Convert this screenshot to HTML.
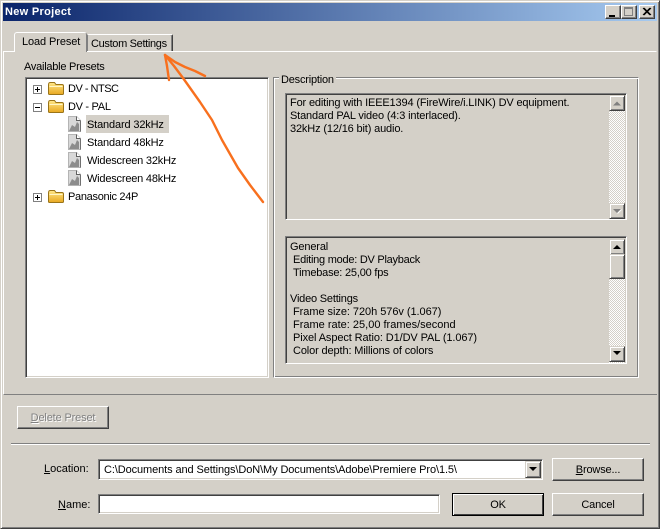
<!DOCTYPE html>
<html><head><meta charset="utf-8">
<style>
html,body{margin:0;padding:0}
body{width:660px;height:529px;overflow:hidden;position:relative;background:#d4d0c8;font:11px/13px "Liberation Sans",sans-serif;color:#000;letter-spacing:-.15px}
div{position:absolute;box-sizing:border-box}
.t{white-space:nowrap}
.btn{background:#d4d0c8;border:1px solid;border-color:#fff #404040 #404040 #fff;box-shadow:inset -1px -1px 0 #808080;text-align:center;line-height:22px}
.sunk{background:#fff;border:1px solid;border-color:#808080 #fff #fff #808080;box-shadow:inset 1px 1px 0 #404040,inset -1px -1px 0 #d4d0c8}
.sb{width:16px;height:16px;background:#d4d0c8;border:1px solid;border-color:#d4d0c8 #404040 #404040 #d4d0c8;box-shadow:inset 1px 1px 0 #fff,inset -1px -1px 0 #808080}
.track{width:16px;background:repeating-conic-gradient(#fff 0 25%,#d4d0c8 0 50%) 0 0/2px 2px}
u{text-decoration:underline}
svg{position:absolute;overflow:visible}
</style></head><body>
<!-- window frame -->
<div style="left:0;top:0;width:660px;height:529px;border:1px solid;border-color:#d4d0c8 #404040 #404040 #d4d0c8;box-shadow:inset 1px 1px 0 #fff,inset -1px -1px 0 #808080"></div>
<!-- title -->
<div style="left:3px;top:3px;width:654px;height:18px;background:linear-gradient(90deg,#0a246a,#a6caf0)"></div>
<div class="t" style="left:5px;top:5px;color:#fff;font-weight:bold;font-size:11px;line-height:14px;letter-spacing:.3px">New Project</div>
<div class="btn" style="left:605px;top:5px;width:16px;height:14px"></div><div style="left:609px;top:15px;width:6px;height:2px;background:#000"></div>
<div class="btn" style="left:621px;top:5px;width:16px;height:14px"></div><div style="left:624px;top:7px;width:9px;height:9px;border:1px solid #808080;border-top-width:2px"></div>
<div class="btn" style="left:639px;top:5px;width:16px;height:14px"></div>
<svg style="left:0;top:0" width="660" height="30"><path d="M643 8l7 7M644 8l7 7M650 8l-7 7M651 8l-7 7" stroke="#000" stroke-width="1" fill="none"/></svg>
<!-- tab panel -->
<div style="left:3px;top:51px;width:654px;height:344px;border:1px solid;border-color:#fff #d4d0c8 #808080 #fff"></div>
<div style="left:4px;top:394px;width:653px;height:1px;background:#808080"></div>
<!-- tabs -->
<div style="left:14px;top:32px;width:73px;height:20px;background:#d4d0c8;border:1px solid #fff;border-bottom:0;border-right:1px solid #808080;border-radius:3px 3px 0 0"></div>
<div class="t" style="left:22px;top:36px;letter-spacing:-.1px">Load Preset</div>
<div style="left:87px;top:34px;width:86px;height:17px;background:#d4d0c8;border:1px solid #808080;border-bottom:0;border-top-color:#fff;border-right:1px solid #404040;border-radius:2px 2px 0 0;box-shadow:inset -1px 0 0 #808080"></div>
<div class="t" style="left:91px;top:38px;letter-spacing:-.33px">Custom Settings</div>
<div class="t" style="left:24px;top:61px;letter-spacing:-.25px">Available Presets</div>
<!-- tree -->
<div class="sunk" style="left:25px;top:77px;width:244px;height:301px"></div>
<div style="left:86px;top:115px;width:83px;height:18px;background:#d4d0c8"></div>
<div class="t" style="left:68px;top:83px;letter-spacing:-.5px">DV - NTSC</div>
<div class="t" style="left:68px;top:101px;letter-spacing:-.3px">DV - PAL</div>
<div class="t" style="left:87px;top:119px">Standard 32kHz</div>
<div class="t" style="left:87px;top:137px">Standard 48kHz</div>
<div class="t" style="left:87px;top:155px;letter-spacing:-.2px">Widescreen 32kHz</div>
<div class="t" style="left:87px;top:173px;letter-spacing:-.2px">Widescreen 48kHz</div>
<div class="t" style="left:68px;top:191px;letter-spacing:-.3px">Panasonic 24P</div>
<svg style="left:0;top:0" width="660" height="529">
 <defs>
  <linearGradient id="f" x1="0" y1="0" x2="0" y2="1"><stop offset="0" stop-color="#ffe88a"/><stop offset="1" stop-color="#e8a820"/></linearGradient>
  <g id="fold"><path d="M.5 4V12.500Q.5 13.500 1.500 13.500H14.500Q15.500 13.500 15.500 12.500V5Q15.500 3.500 14 3.500H8L6.500 1.500H2Q.5 1.500 .5 4Z" fill="url(#f)" stroke="#9a7418"/><path d="M1.500 5.500H14.500" stroke="#fff6c8"/></g>
  <g id="pl"><rect x=".5" y=".5" width="8" height="8" fill="#fff" stroke="#808080"/><path d="M2 4.500H7" stroke="#000"/></g>
  <g id="doc"><path d="M.5.500H8.500L12.500 4.500V15.500H.5Z" fill="#d8d8d8" stroke="#b4b4b4"/><path d="M8.500.500V4.500H12.500" fill="#fff" stroke="#606060"/><path d="M1 15L4 9 7 11 9 6 11 8 11 15Z" fill="#8c8c8c"/><path d="M12.500 5V15.500" stroke="#707070"/></g>
 </defs>
 <use href="#pl" x="33" y="85"/><path d="M37.500 87V92" stroke="#000"/>
 <use href="#pl" x="33" y="103"/>
 <use href="#pl" x="33" y="193"/><path d="M37.500 195V200" stroke="#000"/>
 <use href="#fold" x="48" y="81"/><use href="#fold" x="48" y="99"/><use href="#fold" x="48" y="189"/>
 <use href="#doc" x="68" y="116"/><use href="#doc" x="68" y="134"/><use href="#doc" x="68" y="152"/><use href="#doc" x="68" y="170"/>
</svg>
<!-- description group -->
<div style="left:273px;top:77px;width:366px;height:301px;border:1px solid;border-color:#808080 #fff #fff #808080;box-shadow:inset 1px 1px 0 #fff,inset -1px -1px 0 #808080"></div>
<div class="t" style="left:279px;top:74px;background:#d4d0c8;padding:0 2px;letter-spacing:-.2px">Description</div>
<div class="sunk" style="left:285px;top:93px;width:342px;height:127px;background:#d4d0c8;box-shadow:inset 1px 1px 0 #404040"></div>
<div class="t" style="left:290px;top:97px">For editing with IEEE1394 (FireWire/i.LINK) DV equipment.<br>Standard PAL video (4:3 interlaced).<br>32kHz (12/16 bit) audio.</div>
<div class="track" style="left:609px;top:95px;height:123px"></div>
<div class="sb" style="left:609px;top:95px"></div>
<div class="sb" style="left:609px;top:203px"></div>
<svg style="left:0;top:0" width="660" height="529"><path d="M613 105.500L617 101.500L621 105.500Z" fill="#808080"/><path d="M613 209L617 213L621 209Z" fill="#808080"/><path d="M617.500 213.500L621.500 209.500" stroke="#fff"/></svg>
<div class="sunk" style="left:285px;top:236px;width:342px;height:128px;background:#d4d0c8;box-shadow:inset 1px 1px 0 #404040"></div>
<div class="t" style="left:290px;top:241px">General</div>
<div class="t" style="left:293px;top:254px;letter-spacing:-.25px">Editing mode: DV Playback</div>
<div class="t" style="left:293px;top:267px;letter-spacing:-.2px">Timebase: 25,00 fps</div>
<div class="t" style="left:290px;top:293px;letter-spacing:-.2px">Video Settings</div>
<div class="t" style="left:293px;top:306px;letter-spacing:-.05px">Frame size: 720h 576v (1.067)</div>
<div class="t" style="left:293px;top:319px;letter-spacing:0">Frame rate: 25,00 frames/second</div>
<div class="t" style="left:293px;top:332px;letter-spacing:-.1px">Pixel Aspect Ratio: D1/DV PAL (1.067)</div>
<div class="t" style="left:293px;top:345px;letter-spacing:-.13px">Color depth: Millions of colors</div>
<div class="track" style="left:609px;top:239px;height:124px"></div>
<div class="sb" style="left:609px;top:239px"></div>
<div class="sb" style="left:609px;top:254px;height:25px"></div>
<div class="sb" style="left:609px;top:346px"></div>
<svg style="left:0;top:0" width="660" height="529"><path d="M613 249L617 245L621 249Z" fill="#000"/><path d="M613 351L617 355L621 351Z" fill="#000"/></svg>
<!-- delete -->
<div class="btn" style="left:17px;top:406px;width:92px;height:23px;color:#808080;text-shadow:1px 1px 0 #fff"><u>D</u>elete Preset</div>
<!-- separator -->
<div style="left:11px;top:443px;width:639px;height:1px;background:#808080"></div>
<div style="left:11px;top:444px;width:639px;height:1px;background:#fff"></div>
<!-- location -->
<div class="t" style="left:44px;top:463px;letter-spacing:0"><u>L</u>ocation:</div>
<div class="sunk" style="left:98px;top:459px;width:445px;height:21px"></div>
<div class="t" style="left:104px;top:464px;letter-spacing:-.1px">C:\Documents and Settings\DoN\My Documents\Adobe\Premiere Pro\1.5\</div>
<div class="sb" style="left:525px;top:461px;width:16px;height:17px"></div>
<svg style="left:0;top:0" width="660" height="529"><path d="M529 467H537L533 471Z" fill="#000"/></svg>
<div class="btn" style="left:552px;top:458px;width:92px;height:23px"><u>B</u>rowse...</div>
<!-- name -->
<div class="t" style="left:58px;top:499px;letter-spacing:0"><u>N</u>ame:</div>
<div class="sunk" style="left:98px;top:494px;width:342px;height:20px"></div>
<div class="btn" style="left:452px;top:493px;width:92px;height:23px;border-color:#000;box-shadow:inset 1px 1px 0 #fff,inset -1px -1px 0 #404040">OK</div>
<div class="btn" style="left:552px;top:493px;width:92px;height:23px">Cancel</div>
<!-- arrow -->
<svg style="left:0;top:0" width="660" height="529"><g fill="none" stroke="#f8701e" stroke-width="2.400" stroke-linecap="round" stroke-linejoin="round"><path d="M165 55L167 66 169 80"/><path d="M165 55L175 62 185 67 195 71 205 76"/><path d="M165 55L174 66 183 78 200 102 212 120 222 140 238 168 250 185 263 202"/></g></svg>
</body></html>
